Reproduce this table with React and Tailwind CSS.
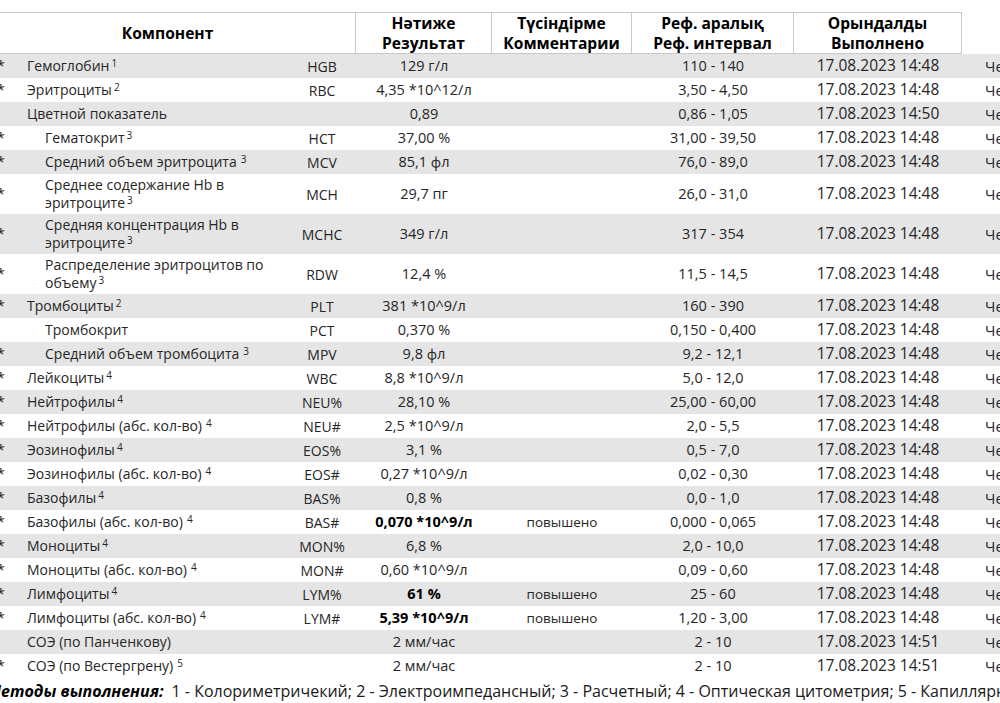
import React from "react";

const D1 = "17.08.2023 14:48";
const rows = [
  { star: true, name: "Гемоглобин", sup: "1", code: "HGB", res: "129 г/л", ref: "110 - 140", date: D1 },
  { star: true, name: "Эритроциты", sup: "2", code: "RBC", res: "4,35 *10^12/л", ref: "3,50 - 4,50", date: D1 },
  { name: "Цветной показатель", code: "", res: "0,89", ref: "0,86 - 1,05", date: "17.08.2023 14:50" },
  { star: true, sub: true, name: "Гематокрит", sup: "3", code: "HCT", res: "37,00 %", ref: "31,00 - 39,50", date: D1 },
  { star: true, sub: true, name: "Средний объем эритроцита", sp: true, sup: "3", code: "MCV", res: "85,1 фл", ref: "76,0 - 89,0", date: D1 },
  { star: true, sub: true, two: true, name: "Среднее содержание Hb в", name2: "эритроците", sup: "3", code: "MCH", res: "29,7 пг", ref: "26,0 - 31,0", date: D1 },
  { star: true, sub: true, two: true, name: "Средняя концентрация Hb в", name2: "эритроците", sup: "3", code: "MCHC", res: "349 г/л", ref: "317 - 354", date: D1 },
  { star: true, sub: true, two: true, name: "Распределение эритроцитов по", name2: "объему", sup: "3", code: "RDW", res: "12,4 %", ref: "11,5 - 14,5", date: D1 },
  { star: true, name: "Тромбоциты", sup: "2", code: "PLT", res: "381 *10^9/л", ref: "160 - 390", date: D1 },
  { sub: true, name: "Тромбокрит", code: "PCT", res: "0,370 %", ref: "0,150 - 0,400", date: D1 },
  { star: true, sub: true, name: "Средний объем тромбоцита", sp: true, sup: "3", code: "MPV", res: "9,8 фл", ref: "9,2 - 12,1", date: D1 },
  { star: true, name: "Лейкоциты", sup: "4", code: "WBC", res: "8,8 *10^9/л", ref: "5,0 - 12,0", date: D1 },
  { star: true, name: "Нейтрофилы", sup: "4", code: "NEU%", res: "28,10 %", ref: "25,00 - 60,00", date: D1 },
  { star: true, name: "Нейтрофилы (абс. кол-во)", sp: true, sup: "4", code: "NEU#", res: "2,5 *10^9/л", ref: "2,0 - 5,5", date: D1 },
  { star: true, name: "Эозинофилы", sup: "4", code: "EOS%", res: "3,1 %", ref: "0,5 - 7,0", date: D1 },
  { star: true, name: "Эозинофилы (абс. кол-во)", sp: true, sup: "4", code: "EOS#", res: "0,27 *10^9/л", ref: "0,02 - 0,30", date: D1 },
  { star: true, name: "Базофилы", sup: "4", code: "BAS%", res: "0,8 %", ref: "0,0 - 1,0", date: D1 },
  { star: true, name: "Базофилы (абс. кол-во)", sp: true, sup: "4", code: "BAS#", res: "0,070 *10^9/л", bold: true, com: "повышено", ref: "0,000 - 0,065", date: D1 },
  { star: true, name: "Моноциты", sup: "4", code: "MON%", res: "6,8 %", ref: "2,0 - 10,0", date: D1 },
  { star: true, name: "Моноциты (абс. кол-во)", sp: true, sup: "4", code: "MON#", res: "0,60 *10^9/л", ref: "0,09 - 0,60", date: D1 },
  { star: true, name: "Лимфоциты", sup: "4", code: "LYM%", res: "61 %", bold: true, com: "повышено", ref: "25 - 60", date: D1 },
  { star: true, name: "Лимфоциты (абс. кол-во)", sp: true, sup: "4", code: "LYM#", res: "5,39 *10^9/л", bold: true, com: "повышено", ref: "1,20 - 3,00", date: D1 },
  { name: "СОЭ (по Панченкову)", code: "", res: "2 мм/час", ref: "2 - 10", date: "17.08.2023 14:51" },
  { star: true, name: "СОЭ (по Вестергрену)", sp: true, sup: "5", code: "", res: "2 мм/час", ref: "2 - 10", date: "17.08.2023 14:51" },
];

function Sup({ r }) {
  if (!r.sup) return null;
  return (
    <span className={`relative top-[-4px] text-[10px] leading-none ${r.sp ? "ml-[4px]" : "ml-[2px]"}`}>{r.sup}</span>
  );
}

function Row({ r, i }) {
  const bg = i % 2 === 0 ? "bg-[#e5e5e5]" : "bg-white";
  return (
    <div className={`flex items-center ${bg} ${r.two ? "h-[40px]" : "h-[24px]"} text-[#262626]`}>
      <div className="w-[30px] shrink-0 -ml-[3px] text-[14px] leading-none self-center">
        {r.star ? "*" : ""}
      </div>
      <div className={`w-[261px] shrink-0 text-[14px] leading-[18px] ${r.sub ? "pl-[18px]" : ""}`}>
        {r.two ? (
          <>
            <div>{r.name}</div>
            <div>
              {r.name2}
              <Sup r={r} />
            </div>
          </>
        ) : (
          <span>
            {r.name}
            <Sup r={r} />
          </span>
        )}
      </div>
      <div className="w-[68px] shrink-0 text-center text-[14px]">{r.code}</div>
      <div className={`w-[136px] shrink-0 text-center text-[14.5px] ${r.bold ? "font-bold text-black" : ""}`}>{r.res}</div>
      <div className="w-[140px] shrink-0 text-center text-[13.5px]">{r.com || ""}</div>
      <div className="w-[162px] shrink-0 text-center text-[14.5px]">{r.ref}</div>
      <div className="w-[168px] shrink-0 text-center text-[15.5px]">{r.date}</div>
      <div className="pl-[23px] text-[15px] whitespace-nowrap">Чередниченко</div>
    </div>
  );
}

export default function App() {
  return (
    <div
      className="w-[1000px] h-[703px] overflow-hidden bg-white text-[#262626]"
      style={{ fontFamily: '"Open Sans", "Noto Sans", sans-serif' }}
    >
      <div className="h-[12px]" />
      <div className="flex w-[962px] h-[42px] border-t border-b border-[#c8c8c8] text-[15.6px] font-bold text-black leading-[20px]">
        <div className="w-[356px] shrink-0 flex items-center justify-center pr-[20px] border-r border-[#c8c8c8]">Компонент</div>
        <div className="w-[136px] shrink-0 flex flex-col items-center justify-center border-r border-[#c8c8c8]">
          <span>Нәтиже</span>
          <span>Результат</span>
        </div>
        <div className="w-[140px] shrink-0 flex flex-col items-center justify-center border-r border-[#c8c8c8]">
          <span>Түсіндірме</span>
          <span>Комментарии</span>
        </div>
        <div className="w-[162px] shrink-0 flex flex-col items-center justify-center border-r border-[#c8c8c8]">
          <span>Реф. аралық</span>
          <span>Реф. интервал</span>
        </div>
        <div className="w-[168px] shrink-0 flex flex-col items-center justify-center border-r border-[#c8c8c8]">
          <span>Орындалды</span>
          <span>Выполнено</span>
        </div>
      </div>
      {rows.map((r, i) => (
        <Row key={i} r={r} i={i} />
      ))}
      <div className="h-[25px] flex items-center whitespace-nowrap text-[16px] -ml-[13px] text-[#1a1a1a]">
        <span className="font-bold italic text-black">Методы выполнения:</span>
        <span className="ml-[8px]">
          1 - Колориметричекий; 2 - Электроимпедансный; 3 - Расчетный; 4 - Оптическая цитометрия; 5 - Капиллярный
        </span>
      </div>
    </div>
  );
}
